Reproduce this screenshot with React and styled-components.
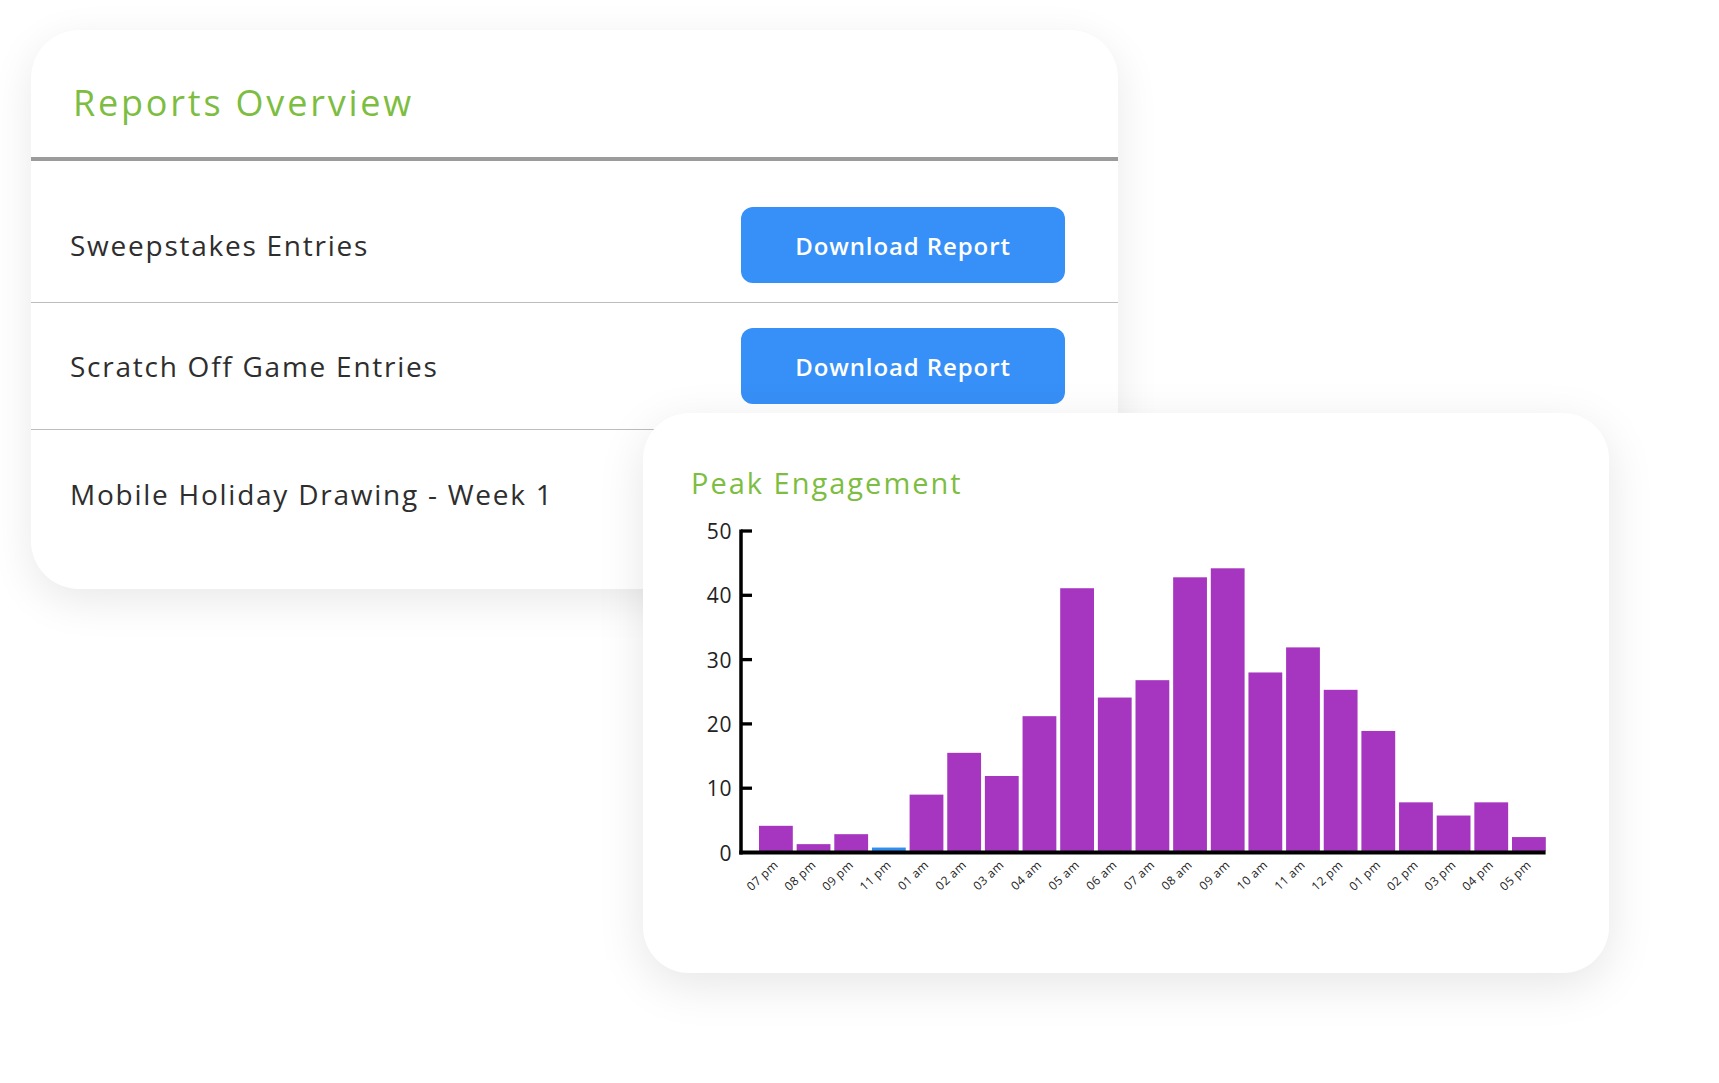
import React from "react";
import styled, { createGlobalStyle } from "styled-components";

const GlobalStyle = createGlobalStyle`
  html, body { margin: 0; padding: 0; background: #ffffff; }
  body { font-family: "Open Sans", "Noto Sans", sans-serif; }
  * { box-sizing: border-box; }
`;

const Stage = styled.div`
  position: relative;
  width: 1719px;
  height: 1083px;
  padding: 30px 0 0 31px;
  background: #ffffff;
  overflow: hidden;
`;

const ReportsCard = styled.section`
  width: 1087px;
  height: 559px;
  background: #ffffff;
  border-radius: 48px;
  box-shadow: 0 12px 44px rgba(0, 0, 0, 0.09);
  display: flex;
  flex-direction: column;
  overflow: hidden;
`;

const CardHeader = styled.header`
  height: 127px;
  padding: 55px 0 0 42px;
`;

const Title = styled.h1`
  margin: 0;
  font-family: "Open Sans", sans-serif;
  font-size: ${(p) => p.$size}px;
  line-height: ${(p) => p.$size}px;
  font-weight: 500;
  color: #7dbd41;
  letter-spacing: ${(p) => p.$spacing}px;
  white-space: nowrap;
`;

const HeavyRule = styled.div`
  height: 4px;
  background: #9b9b9b;
`;

const ReportRow = styled.div`
  display: flex;
  align-items: center;
  justify-content: space-between;
  height: ${(p) => (p.$h ? `${p.$h}px` : "auto")};
  padding: ${(p) => p.$pt}px 53px ${(p) => p.$pb}px 39px;
  border-bottom: ${(p) => (p.$last ? "none" : "1px solid #bdbdbd")};
  flex: ${(p) => (p.$last ? 1 : "none")};
  align-items: ${(p) => (p.$last ? "flex-start" : "center")};
`;

const RowLabel = styled.span`
  font-family: "Open Sans", sans-serif;
  font-size: 28px;
  font-weight: 400;
  color: #2e2e2e;
  line-height: 76px;
  letter-spacing: 1.75px;
  white-space: nowrap;
`;

const DownloadButton = styled.button`
  width: 324px;
  height: 76px;
  border: none;
  border-radius: 12px;
  background: #3790f7;
  color: #ffffff;
  font-family: "Open Sans", sans-serif;
  font-size: 24px;
  font-weight: 600;
  letter-spacing: 0.9px;
  cursor: pointer;
`;

const ChartCard = styled.section`
  position: absolute;
  left: 643px;
  top: 413px;
  width: 966px;
  height: 560px;
  background: #ffffff;
  border-radius: 46px;
  box-shadow: 0 12px 48px rgba(0, 0, 0, 0.1);
  padding: 55px 0 0 48px;
  display: flex;
  flex-direction: column;
  gap: 18px;
`;

const ChartSvg = styled.svg`
  display: block;
  overflow: visible;
  font-family: "Open Sans", sans-serif;
`;

const rows = [
  { label: "Sweepstakes Entries", pt: 46, pb: 19, button: true },
  { label: "Scratch Off Game Entries", pt: 25, pb: 25, button: true },
  { label: "Mobile Holiday Drawing - Week 1", pt: 26, pb: 0, last: true },
];

const data = [
  ["07 pm", 4.15],
  ["08 pm", 1.3],
  ["09 pm", 2.85],
  ["11 pm", 0.77],
  ["01 am", 9.0],
  ["02 am", 15.5],
  ["03 am", 11.9],
  ["04 am", 21.2],
  ["05 am", 41.1],
  ["06 am", 24.1],
  ["07 am", 26.8],
  ["08 am", 42.8],
  ["09 am", 44.2],
  ["10 am", 28.0],
  ["11 am", 31.9],
  ["12 pm", 25.3],
  ["01 pm", 18.9],
  ["02 pm", 7.8],
  ["03 pm", 5.75],
  ["04 pm", 7.8],
  ["05 pm", 2.4],
];

const ZERO = 337.5;
const UNIT = 6.43;
const AXIS_X = 50;
const BAR_X0 = 68;
const STEP = 37.65;
const BAR_W = 33.8;

function PeakChart() {
  const ticks = [0, 10, 20, 30, 40, 50];
  return (
    <ChartSvg width="880" height="400" viewBox="0 0 880 400">
      {data.map(([label, v], i) => {
        const x = BAR_X0 + i * STEP;
        const top = ZERO - v * UNIT;
        return (
          <rect
            key={label}
            x={x}
            y={top}
            width={BAR_W}
            height={336 - top}
            fill={label === "11 pm" ? "#2f8ff0" : "#a636bf"}
          />
        );
      })}
      <line x1={AXIS_X} y1={14.5} x2={AXIS_X} y2={339.5} stroke="#000" strokeWidth="3.5" />
      <line x1={AXIS_X - 1.75} y1={ZERO} x2={854.6} y2={ZERO} stroke="#000" strokeWidth="4" />
      {ticks.map((t) => {
        const y = ZERO - t * UNIT;
        return (
          <g key={t}>
            {t > 0 && (
              <line x1={AXIS_X} y1={y} x2={61} y2={y} stroke="#000" strokeWidth="3.3" />
            )}
            <text
              x={41}
              y={y}
              textAnchor="end"
              dominantBaseline="central"
              fontSize="21"
              letterSpacing="0.6"
              fill="#222"
            >
              {t}
            </text>
          </g>
        );
      })}
      {data.map(([label], i) => {
        const cx = BAR_X0 + i * STEP + BAR_W / 2 + 3;
        const cy = 351;
        return (
          <text
            key={label}
            x={cx}
            y={cy}
            textAnchor="end"
            fontSize="12"
            letterSpacing="0.4"
            fill="#222"
            transform={`rotate(-43 ${cx} ${cy})`}
          >
            {label}
          </text>
        );
      })}
    </ChartSvg>
  );
}

export default function App() {
  return (
    <>
      <GlobalStyle />
      <Stage>
        <ReportsCard>
          <CardHeader>
            <Title $size={36} $spacing={2.8}>Reports Overview</Title>
          </CardHeader>
          <HeavyRule />
          {rows.map((r) => (
            <ReportRow key={r.label} $pt={r.pt} $pb={r.pb} $last={r.last}>
              <RowLabel>{r.label}</RowLabel>
              {r.button && <DownloadButton>Download Report</DownloadButton>}
            </ReportRow>
          ))}
        </ReportsCard>
        <ChartCard>
          <Title $size={29} $spacing={2}>Peak Engagement</Title>
          <PeakChart />
        </ChartCard>
      </Stage>
    </>
  );
}
